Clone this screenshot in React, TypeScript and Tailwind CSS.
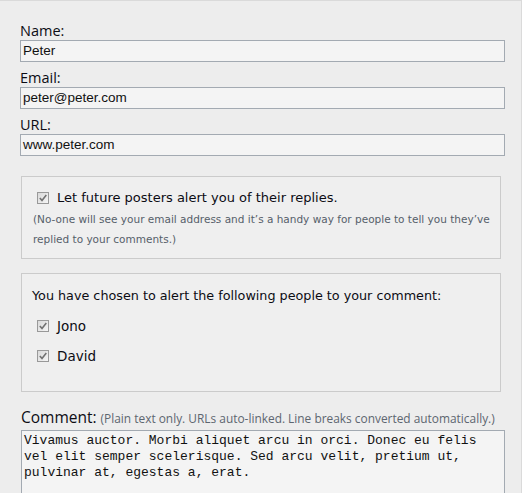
import React from 'react';

const SANS = 'font-["Open_Sans",sans-serif]';
const VERD = 'font-["DejaVu_Sans",Verdana,sans-serif]';

function Tick() {
  return (
    <svg width="12" height="12" viewBox="0 0 12 12" className="shrink-0">
      <defs>
        <linearGradient id="cbg" x1="0" y1="0" x2="1" y2="1">
          <stop offset="0" stopColor="#d8d8d8" />
          <stop offset="1" stopColor="#f6f6f6" />
        </linearGradient>
      </defs>
      <rect x="0.5" y="0.5" width="11" height="11" fill="url(#cbg)" stroke="#999" />
      <path d="M2.8 6 L5 8.4 L9.3 3" fill="none" stroke="#727272" strokeWidth="1.6" />
    </svg>
  );
}

function Field({ label, value }: { label: string; value: string }) {
  return (
    <div className="pt-[6px]">
      <div className={`${SANS} text-[14.5px] leading-[19px] text-[#0c0c14]`}>{label}</div>
      <div className="h-[22px] w-[485px] border border-[#a3aab2] bg-[#f4f4f4] px-[2px] flex items-center font-['Liberation_Sans',Arial,sans-serif] text-[13.5px] text-[#111]">
        {value}
      </div>
    </div>
  );
}

export default function App() {
  return (
    <div className="w-[522px] h-[493px] overflow-hidden bg-[#ededed] border-t border-r border-[#dadada]">
      <div className="pl-[20px] pt-[14px]">
        <Field label="Name:" value="Peter" />
        <Field label="Email:" value="peter@peter.com" />
        <Field label="URL:" value="www.peter.com" />

        <div className={`${VERD} ml-[1px] mt-[20px] w-[480px] h-[83px] border border-[#cbcbcb] bg-[#efefef] pl-[11px] pt-[12px]`}>
          <div className="flex items-center gap-[8px] pl-[4px] text-[13px] leading-[18px] text-[#0c0c14]">
            <Tick />
            <span>Let future posters alert you of their replies.</span>
          </div>
          <p className="mt-[2px] text-[10.5px] leading-[20px] text-[#56606a]">
            (No-one will see your email address and it’s a handy way for people to tell you they’ve replied to your comments.)
          </p>
        </div>

        <div className={`${VERD} ml-[1px] mt-[14px] w-[480px] h-[119px] border border-[#cbcbcb] bg-[#efefef] pl-[10px] pt-[13px] text-[12.75px] text-[#0c0c14]`}>
          <div className="leading-[18px]">You have chosen to alert the following people to your comment:</div>
          <div className="mt-[12px] flex flex-col gap-[12px] pl-[5px] text-[13.5px]">
            <div className="flex items-center gap-[8px] leading-[18px]">
              <Tick />
              <span>Jono</span>
            </div>
            <div className="flex items-center gap-[8px] leading-[18px]">
              <Tick />
              <span>David</span>
            </div>
          </div>
        </div>

        <div className="ml-[1px] mt-[14px] flex items-baseline gap-[4px]">
          <span className={`${SANS} text-[15.5px] leading-[22px] text-[#0c0c14]`}>Comment:</span>
          <span className={`${SANS} text-[11.9px] text-[#5d6670]`}>
            (Plain text only. URLs auto-linked. Line breaks converted automatically.)
          </span>
        </div>
        <div className="ml-[1px] mt-[2px] w-[484px] h-[120px] border border-[#a3aab2] bg-[#f4f4f4] px-[2px] pt-[2px] font-['Liberation_Mono','Courier_New',monospace] text-[13px] leading-[16px] text-[#111]">
          Vivamus auctor. Morbi aliquet arcu in orci. Donec eu felis vel elit semper scelerisque. Sed arcu velit, pretium ut, pulvinar at, egestas a, erat.
        </div>
      </div>
    </div>
  );
}
